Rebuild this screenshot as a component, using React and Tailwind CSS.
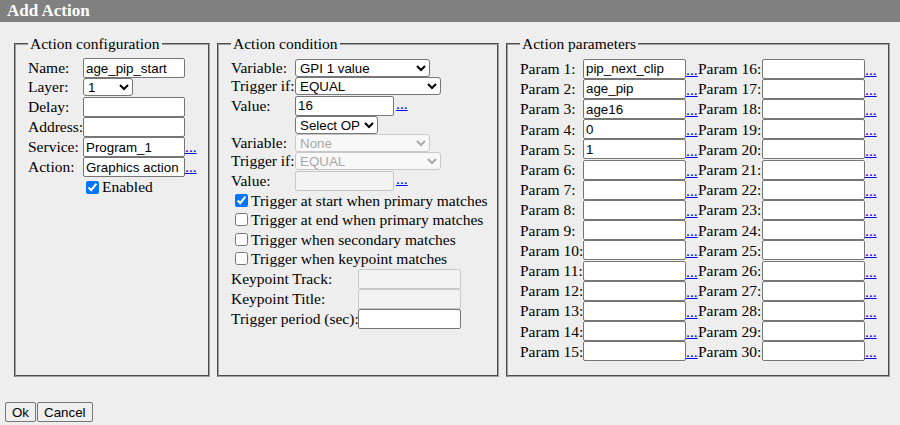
import React from "react";

const sans = "font-['Liberation_Sans',Arial,sans-serif]";
const inputCls = `h-[20px] border border-[#767676] rounded-[2px] bg-white px-[2px] text-[13.33px] ${sans} text-black outline-none`;
const disabledInputCls = `h-[20px] border border-[#c8c8c8] rounded-[2px] bg-[#f3f3f3] px-[2px] text-[13.33px] ${sans} outline-none`;
const selectCls = `h-[18px] border border-[#767676] rounded-[3px] bg-white text-[13.33px] ${sans} text-black outline-none`;
const disabledSelectCls = `h-[18px] border border-[#c8c8c8] rounded-[3px] bg-[#f8f8f8] text-[13.33px] ${sans} text-[#a9a9a9] outline-none`;

function Dots() {
  return <a href="#" className="text-[#0000ee] underline leading-none">...</a>;
}

function Fieldset({ title, width, children }) {
  return (
    <fieldset className={`${width} min-w-0 shrink-0 border-2 border-[#a0a0a0] [border-style:groove] px-[12px] pt-[5.6px] pb-[14px]`}>
      <legend className="px-[2px] leading-[18px]">{title}</legend>
      {children}
    </fieldset>
  );
}

function Row({ label, labelW, h, children }) {
  return (
    <div className={`flex items-center ${h}`}>
      <span className={`${labelW} shrink-0 whitespace-nowrap`}>{label}</span>
      {children}
    </div>
  );
}

const params = [
  "pip_next_clip",
  "age_pip",
  "age16",
  "0",
  "1",
  "", "", "", "", "", "", "", "", "", "",
];

export default function App() {
  return (
    <div className="min-h-screen bg-[#eeeeee] text-black font-['Liberation_Serif','Times_New_Roman',serif] text-[15.5px]">
      <div className="h-[22px] bg-[#808080] pl-[7px] text-white font-bold text-[17px] leading-[22px]">
        Add Action
      </div>

      <div className="flex items-stretch gap-[7px] pl-[14px] pt-[13px]">
        {/* Action configuration */}
        <Fieldset title="Action configuration" width="w-[196px]">
          <Row label="Name:" labelW="w-[55px]" h="h-[19px]">
            <input className={`${inputCls} w-[102px]`} defaultValue="age_pip_start" />
          </Row>
          <Row label="Layer:" labelW="w-[55px]" h="h-[19px]">
            <select className={`${selectCls} w-[50px]`} defaultValue="1">
              <option>1</option>
            </select>
          </Row>
          <Row label="Delay:" labelW="w-[55px]" h="h-[20px]">
            <input className={`${inputCls} w-[102px]`} />
          </Row>
          <Row label="Address:" labelW="w-[55px]" h="h-[20.5px]">
            <input className={`${inputCls} w-[102px]`} />
          </Row>
          <Row label="Service:" labelW="w-[55px]" h="h-[20px]">
            <input className={`${inputCls} w-[102px]`} defaultValue="Program_1" />
            <Dots />
          </Row>
          <Row label="Action:" labelW="w-[55px]" h="h-[20px]">
            <input className={`${inputCls} w-[102px]`} defaultValue="Graphics action" />
            <Dots />
          </Row>
          <div className="flex items-center h-[20px] pl-[55px]">
            <input type="checkbox" defaultChecked className="w-[13px] h-[13px] ml-[3px] mr-[3px]" />
            <span>Enabled</span>
          </div>
        </Fieldset>

        {/* Action condition */}
        <Fieldset title="Action condition" width="w-[282px]">
          <Row label="Variable:" labelW="w-[64px]" h="h-[18px]">
            <select className={`${selectCls} w-[135px]`}>
              <option>GPI 1 value</option>
            </select>
          </Row>
          <Row label="Trigger if:" labelW="w-[64px]" h="h-[19px]">
            <select className={`${selectCls} w-[146px]`}>
              <option>EQUAL</option>
            </select>
          </Row>
          <Row label="Value:" labelW="w-[64px]" h="h-[20px]">
            <input className={`${inputCls} w-[99px]`} defaultValue="16" />
            <span className="ml-[2px] self-end"><Dots /></span>
          </Row>
          <div className="flex items-center h-[18px] pl-[64px]">
            <select className={`${selectCls} w-auto`}>
              <option>Select OP</option>
            </select>
          </div>
          <Row label="Variable:" labelW="w-[64px]" h="h-[18px]">
            <select disabled className={`${disabledSelectCls} w-[135px]`}>
              <option>None</option>
            </select>
          </Row>
          <Row label="Trigger if:" labelW="w-[64px]" h="h-[19px]">
            <select disabled className={`${disabledSelectCls} w-[146px]`}>
              <option>EQUAL</option>
            </select>
          </Row>
          <Row label="Value:" labelW="w-[64px]" h="h-[20px]">
            <input disabled className={`${disabledInputCls} w-[99px]`} />
            <span className="ml-[2px] self-end"><Dots /></span>
          </Row>
          {[
            ["Trigger at start when primary matches", true],
            ["Trigger at end when primary matches", false],
            ["Trigger when secondary matches", false],
            ["Trigger when keypoint matches", false],
          ].map(([t, c]) => (
            <div key={t} className="flex items-center h-[19.5px] whitespace-nowrap">
              <input type="checkbox" defaultChecked={c} className="w-[13px] h-[13px] ml-[4px] mr-[3px]" />
              <span>{t}</span>
            </div>
          ))}
          <Row label="Keypoint Track:" labelW="w-[127px]" h="h-[20.5px]">
            <input disabled className={`${disabledInputCls} w-[103px]`} />
          </Row>
          <Row label="Keypoint Title:" labelW="w-[127px]" h="h-[20px]">
            <input disabled className={`${disabledInputCls} w-[103px]`} />
          </Row>
          <Row label="Trigger period (sec):" labelW="w-[127px]" h="h-[20px]">
            <input className={`${inputCls} w-[103px]`} />
          </Row>
        </Fieldset>

        {/* Action parameters */}
        <Fieldset title="Action parameters" width="w-[384px]">
          {params.map((v, i) => (
            <div key={i} className="flex items-center h-[20.2px] whitespace-nowrap">
              <span className="w-[63px] shrink-0">Param {i + 1}:</span>
              <input className={`${inputCls} w-[103px]`} defaultValue={v} />
              <span className="w-[12px] shrink-0 self-end leading-[18px]"><Dots /></span>
              <span className="w-[64px] shrink-0">Param {i + 16}:</span>
              <input className={`${inputCls} w-[103px]`} />
              <span className="w-[12px] shrink-0 self-end leading-[18px]"><Dots /></span>
            </div>
          ))}
        </Fieldset>
      </div>

      <div className="flex pl-[5px] pt-[25px]">
        <button className={`h-[20px] px-[6px] border border-[#767676] rounded-[2px] bg-[#efefef] text-[13.33px] ${sans}`}>
          Ok
        </button>
        <button className={`h-[20px] px-[6px] ml-[1px] border border-[#767676] rounded-[2px] bg-[#efefef] text-[13.33px] ${sans}`}>
          Cancel
        </button>
      </div>
    </div>
  );
}
